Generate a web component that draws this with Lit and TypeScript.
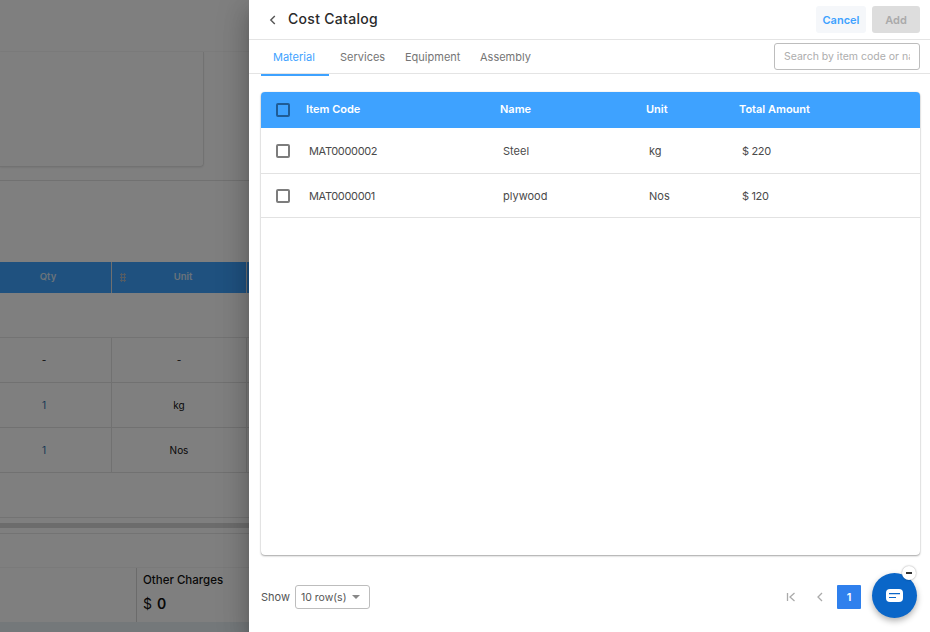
import { LitElement, html, css } from 'lit';
import { customElement, state } from 'lit/decorators.js';

interface CatalogItem {
  code: string;
  name: string;
  unit: string;
  amount: string;
}

const ITEMS: CatalogItem[] = [
  { code: 'MAT0000002', name: 'Steel', unit: 'kg', amount: '$ 220' },
  { code: 'MAT0000001', name: 'plywood', unit: 'Nos', amount: '$ 120' },
];

const TABS = ['Material', 'Services', 'Equipment', 'Assembly'];

/** The estimate page that sits dimmed behind the drawer. */
@customElement('estimate-page')
export class EstimatePage extends LitElement {
  static styles = css`
    :host {
      display: block;
      height: 632px;
      background: #fff;
      overflow: hidden;
      color: #111;
    }

    .top {
      height: 51px;
      border-bottom: 1px solid #f6f6f6;
    }

    .card-zone {
      height: 128px;
      border-bottom: 1px solid #e2e2e2;
    }

    .card {
      width: 204px;
      height: 115px;
      box-sizing: border-box;
      border-right: 1px solid #e4e4e4;
      border-bottom: 1px solid #e4e4e4;
      border-bottom-right-radius: 4px;
      box-shadow: 0 1px 2px rgba(0, 0, 0, 0.08);
    }

    .spacer {
      height: 81px;
    }

    /* the first column runs off the left edge of the window */
    .row {
      display: grid;
      grid-template-columns: 135px 135px 120px;
      margin-left: -23px;
      box-sizing: border-box;
    }

    .head {
      height: 31px;
      align-items: center;
      background: #3ea2ff;
      color: #d5e6f5;
      font-size: 9.5px;
      font-weight: 600;
      text-align: center;
    }

    .head > div {
      height: 100%;
      box-sizing: border-box;
      padding-left: 8px;
      line-height: 29px;
      border-right: 1px solid #e0e0e0;
      position: relative;
    }

    .grip {
      position: absolute;
      left: 8px;
      top: 11px;
      width: 6px;
      height: 9px;
      background-image: radial-gradient(circle, #a9b9c9 1px, transparent 1.2px);
      background-size: 3px 3px;
    }

    .band {
      height: 44px;
      border-bottom: 1px solid #e6e6e6;
    }

    .cell-row {
      height: 45px;
      border-bottom: 1px solid #e2e2e2;
      font-size: 10px;
      text-align: center;
    }

    .cell-row > div {
      border-right: 1px solid #e2e2e2;
      line-height: 44px;
    }

    .qty {
      color: #2d6fa8;
    }

    .gap {
      height: 44px;
      border-bottom: 1px solid #e6e6e6;
    }

    .thick {
      height: 5px;
      margin-top: 5px;
      background: #d9d9d9;
    }

    .rule {
      height: 5px;
      border-bottom: 1px solid #e6e6e6;
    }

    .gap-small {
      height: 33px;
      border-bottom: 1px solid #f4f4f4;
    }

    .summary {
      height: 54px;
      display: flex;
    }

    .blank {
      width: 136px;
      border-right: 1px solid #d6d6d6;
    }

    .charge {
      padding: 4px 0 0 6px;
    }

    .charge-label {
      font-size: 11.5px;
      font-weight: 500;
      line-height: 16px;
    }

    .charge-value {
      display: flex;
      gap: 5px;
      align-items: baseline;
      margin-top: 7px;
      font-size: 14px;
      line-height: 18px;
    }

    .charge-value b {
      font-weight: 600;
    }

    .strip {
      height: 11px;
      background: #e8f0f5;
    }
  `;

  render() {
    return html`
      <div class="top"></div>
      <div class="card-zone"><div class="card"></div></div>
      <div class="spacer"></div>
      <div class="row head">
        <div>Qty</div>
        <div><span class="grip"></span>Unit</div>
        <div></div>
      </div>
      <div class="band"></div>
      <div class="row cell-row"><div>-</div><div>-</div><div></div></div>
      <div class="row cell-row"><div class="qty">1</div><div>kg</div><div></div></div>
      <div class="row cell-row"><div class="qty">1</div><div>Nos</div><div></div></div>
      <div class="gap"></div>
      <div class="thick"></div>
      <div class="rule"></div>
      <div class="gap-small"></div>
      <div class="summary">
        <div class="blank"></div>
        <div class="charge">
          <div class="charge-label">Other Charges</div>
          <div class="charge-value"><span>$</span><b>0</b></div>
        </div>
      </div>
      <div class="strip"></div>
    `;
  }
}

@customElement('app-root')
export class AppRoot extends LitElement {
  static styles = css`
    :host {
      display: block;
      position: relative;
      width: 930px;
      height: 632px;
      overflow: hidden;
      font-family: Inter, 'Noto Sans', sans-serif;
    }

    .scrim {
      position: absolute;
      inset: 0;
      background: rgba(0, 0, 0, 0.5);
    }

    .drawer {
      position: absolute;
      top: 0;
      right: 0;
      bottom: 0;
      width: 681px;
      display: flex;
      flex-direction: column;
      background: #fff;
      box-shadow: 0 8px 10px -5px rgba(0, 0, 0, 0.2), 0 16px 24px 2px rgba(0, 0, 0, 0.14),
        0 6px 30px 5px rgba(0, 0, 0, 0.12);
    }

    .title-bar {
      height: 39px;
      flex: none;
      display: flex;
      align-items: center;
      padding: 0 10px 0 19px;
      border-bottom: 1px solid #e4e4e4;
    }

    .back {
      width: 10px;
      height: 10px;
      margin-right: 10px;
      stroke: #555;
      fill: none;
      stroke-width: 1.4;
    }

    h1 {
      flex: 1;
      margin: 0 0 2px;
      font-size: 14px;
      font-weight: 500;
      color: #2a2a2a;
      letter-spacing: 0.3px;
    }

    button {
      height: 27px;
      border: none;
      border-radius: 3px;
      padding: 0;
      font: inherit;
      font-size: 11px;
      font-weight: 600;
    }

    .cancel {
      width: 50px;
      margin-right: 6px;
      color: #3ea2ff;
      background: #f5f7fa;
    }

    .add {
      width: 48px;
      color: #aaa;
      background: #dddddd;
    }

    .tab-bar {
      height: 34px;
      flex: none;
      display: flex;
      align-items: flex-start;
      padding: 0 10px 0 12px;
      box-sizing: border-box;
      border-bottom: 1px solid #e4e4e4;
    }

    .tabs {
      flex: 1;
      height: 33px;
      display: grid;
      grid-template-columns: 68px 65px 75px 60px;
    }

    .tab {
      font-size: 11px;
      line-height: 34px;
      color: #757575;
      padding-left: 11px;
      white-space: nowrap;
    }

    .tab.active {
      color: #3ea2ff;
      padding-left: 12px;
      border-bottom: 2px solid #3ea2ff;
      box-sizing: border-box;
    }

    .search {
      width: 146px;
      height: 27px;
      margin-top: 3px;
      box-sizing: border-box;
      border: 1px solid #bdbdbd;
      border-radius: 3px;
      padding: 0 9px;
      outline: none;
      font: inherit;
      font-size: 10.5px;
      color: #333;
    }

    .search::placeholder {
      color: #adadad;
    }

    .content {
      flex: 1;
      min-height: 0;
      padding: 18px 10px 0 12px;
    }

    .table {
      height: 463px;
      box-sizing: border-box;
      border-radius: 4px;
      background: #fff;
      box-shadow: 0 1px 2px rgba(0, 0, 0, 0.35), 0 0 1px rgba(0, 0, 0, 0.2);
    }

    .grid {
      display: grid;
      grid-template-columns: 45px 194px 146px 93px 1fr;
      align-items: center;
    }

    .thead {
      height: 36px;
      background: #3ea2ff;
      border-radius: 4px 4px 0 0;
      color: #fff;
      font-size: 11px;
      font-weight: 600;
    }

    .thead > div:not(.check) {
      margin-bottom: 2px;
    }

    .thead .check {
      border-color: #1f5c96;
    }

    .tr {
      height: 44px;
      box-sizing: border-box;
      border-bottom: 1px solid #e2e2e2;
      color: #4a4a4a;
      font-size: 11px;
    }

    .thead + .tr {
      height: 46px;
      padding-top: 1px;
    }

    .tr .text {
      padding-left: 3px;
    }

    .tr .tight {
      letter-spacing: -0.35px;
    }

    .check {
      width: 14px;
      height: 14px;
      margin-left: 15px;
      box-sizing: border-box;
      border: 2px solid #7d7d7d;
      border-radius: 2px;
    }

    .footer {
      height: 77px;
      flex: none;
      display: flex;
      align-items: center;
      padding: 7px 69px 0 12px;
      box-sizing: border-box;
    }

    .show {
      font-size: 11px;
      color: #555;
      margin-right: 5px;
    }

    .select {
      width: 75px;
      height: 24px;
      box-sizing: border-box;
      display: flex;
      align-items: center;
      justify-content: space-between;
      padding: 0 9px 0 5px;
      border: 1px solid #bdbdbd;
      border-radius: 3px;
      font-size: 10.5px;
      color: #555;
      white-space: nowrap;
    }

    .caret {
      width: 0;
      height: 0;
      border: 4.5px solid transparent;
      border-top: 4.5px solid #888;
      border-bottom: none;
    }

    .pager {
      margin-left: auto;
      display: flex;
      align-items: center;
    }

    .pager svg {
      width: 10px;
      height: 10px;
      fill: none;
      stroke: #aaa;
      stroke-width: 1.3;
    }

    .pager svg.first {
      margin-right: 19px;
    }

    .pager svg.prev {
      margin-right: 12px;
    }

    .page {
      width: 24px;
      height: 24px;
      background: #2f80ed;
      border-radius: 1px;
      color: #fff;
      font-size: 11px;
      font-weight: 600;
      line-height: 24px;
      text-align: center;
    }

    /* chat launcher floats over the pager */
    .chat {
      position: absolute;
      left: 872px;
      top: 573px;
      width: 45px;
      height: 45px;
      border-radius: 50%;
      background: #0a66c8;
      box-shadow: 0 3px 6px rgba(0, 0, 0, 0.3);
      display: flex;
      align-items: center;
      justify-content: center;
    }

    .chat svg {
      width: 17px;
      height: 13px;
    }

    .minus {
      position: absolute;
      right: 1px;
      top: -7px;
      width: 14px;
      height: 14px;
      box-sizing: border-box;
      border-radius: 50%;
      background: #fff;
      box-shadow: 0 0 2px rgba(0, 0, 0, 0.4);
      display: flex;
      align-items: center;
      justify-content: center;
    }

    .minus::before {
      content: '';
      width: 6px;
      height: 2px;
      background: #333;
    }
  `;

  @state() private _activeTab = 0;

  render() {
    return html`
      <estimate-page></estimate-page>
      <div class="scrim"></div>
      <aside class="drawer">
        <div class="title-bar">
          <svg class="back" viewBox="0 0 10 10"><path d="M6.8 1 2.8 5l4 4" /></svg>
          <h1>Cost Catalog</h1>
          <button class="cancel">Cancel</button>
          <button class="add" disabled>Add</button>
        </div>
        <div class="tab-bar">
          <div class="tabs">
            ${TABS.map(
              (tab, i) =>
                html`<div class="tab ${i === this._activeTab ? 'active' : ''}">${tab}</div>`,
            )}
          </div>
          <input class="search" placeholder="Search by item code or name" />
        </div>
        <div class="content">
          <div class="table">
            <div class="grid thead">
              <div class="check"></div>
              <div>Item Code</div>
              <div>Name</div>
              <div>Unit</div>
              <div>Total Amount</div>
            </div>
            ${ITEMS.map(
              (item) => html`
                <div class="grid tr">
                  <div class="check"></div>
                  <div class="text tight">${item.code}</div>
                  <div class="text">${item.name}</div>
                  <div class="text">${item.unit}</div>
                  <div class="text tight">${item.amount}</div>
                </div>
              `,
            )}
          </div>
        </div>
        <div class="footer">
          <span class="show">Show</span>
          <div class="select">10 row(s)<span class="caret"></span></div>
          <div class="pager">
            <svg class="first" viewBox="0 0 10 10"><path d="M1.5 1v8M8.5 1 4 5l4.5 4" /></svg>
            <svg class="prev" viewBox="0 0 10 10"><path d="M7 1 3 5l4 4" /></svg>
            <div class="page">1</div>
          </div>
        </div>
      </aside>
      <div class="chat">
        <span class="minus"></span>
        <svg viewBox="0 0 17 13">
          <rect width="17" height="13" rx="4" fill="#fff" />
          <path d="M3 4.7h11M3 8.5h7" stroke="#0a66c8" stroke-width="1.2" />
        </svg>
      </div>
    `;
  }
}
